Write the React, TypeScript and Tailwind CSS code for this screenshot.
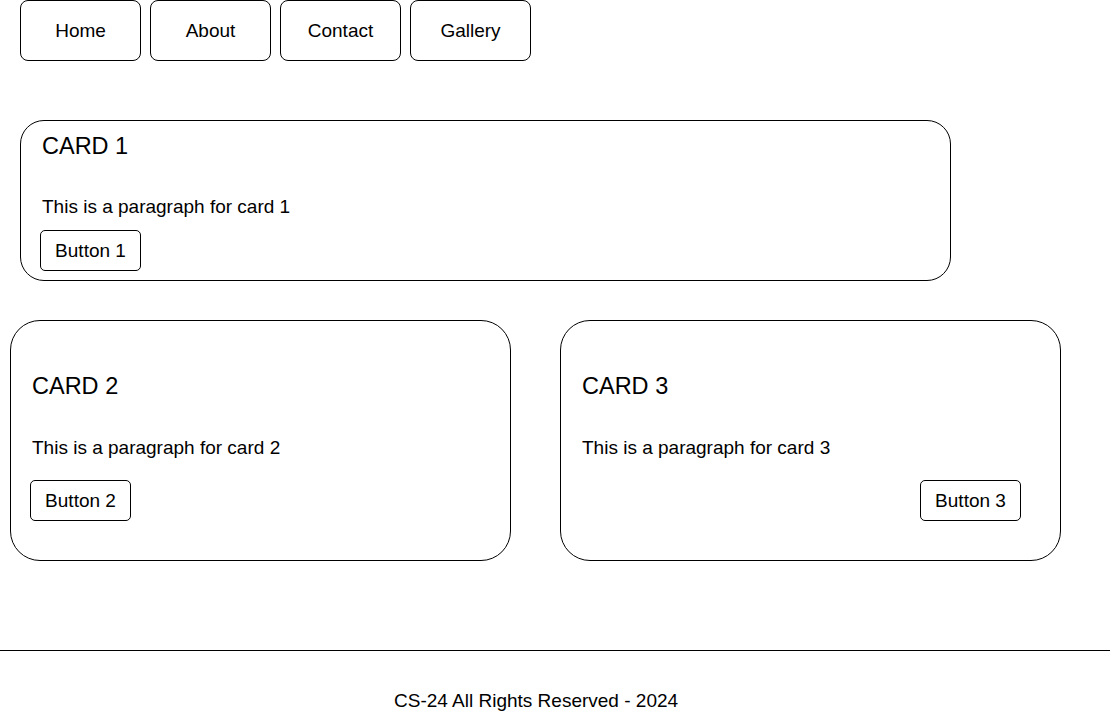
import React from "react";

const font = { fontFamily: '"Liberation Sans", Arial, Helvetica, sans-serif' };

function NavButton({ label }: { label: string }) {
  return (
    <div className="w-[121px] h-[61px] border border-black rounded-[8px] flex items-center justify-center text-[19px] leading-none text-black">
      {label}
    </div>
  );
}

function SmallButton({ label }: { label: string }) {
  return (
    <div className="w-[101px] h-[41px] border border-black rounded-[5px] flex items-center justify-center text-[19px] leading-none text-black">
      {label}
    </div>
  );
}

function Card({ n, right }: { n: number; right?: boolean }) {
  return (
    <div className="w-[501px] h-[241px] border border-black rounded-[30px] pl-[21px] pt-[53.5px] flex flex-col">
      <div className="text-[23.5px] leading-none h-[23.5px]">CARD {n}</div>
      <div className="mt-[40px] text-[19px] leading-none h-[19px]">This is a paragraph for card {n}</div>
      <div className={right ? "mt-[23px] self-end mr-[39px]" : "mt-[23px] -ml-[2px]"}>
        <SmallButton label={`Button ${n}`} />
      </div>
    </div>
  );
}

export default function App() {
  return (
    <div className="w-[1113px] h-[721px] bg-white text-black overflow-hidden" style={font}>
      <nav className="flex gap-[9px] pl-[20px]">
        <NavButton label="Home" />
        <NavButton label="About" />
        <NavButton label="Contact" />
        <NavButton label="Gallery" />
      </nav>

      <div className="mt-[59px] ml-[20px] w-[931px] h-[161px] border border-black rounded-[24px] pl-[21px] pt-[14px] flex flex-col">
        <div className="text-[23.5px] leading-none h-[23.5px]">CARD 1</div>
        <div className="mt-[38.5px] text-[19px] leading-none h-[19px]">This is a paragraph for card 1</div>
        <div className="mt-[14px] -ml-[2px]">
          <SmallButton label="Button 1" />
        </div>
      </div>

      <div className="mt-[39px] ml-[10px] flex gap-[49px]">
        <Card n={2} />
        <Card n={3} right />
      </div>

      <footer className="mt-[89px]">
        <div className="w-[1110px] h-px bg-black" />
        <div className="mt-[40px] pl-[394px] text-[19px] leading-none h-[19px]">CS-24 All Rights Reserved - 2024</div>
      </footer>
    </div>
  );
}
